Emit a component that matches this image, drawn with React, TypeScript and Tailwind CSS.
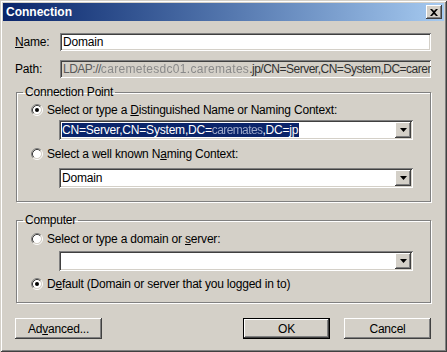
import type { ReactNode } from 'react';

const raised =
    'shadow-[inset_-1px_-1px_#404040,inset_1px_1px_#ffffff,inset_-2px_-2px_#808080,inset_2px_2px_#d4d0c8]';
const sunken =
    'shadow-[inset_1px_1px_#808080,inset_-1px_-1px_#ffffff,inset_2px_2px_#404040,inset_-2px_-2px_#d4d0c8]';

function Radio({ checked }: { checked?: boolean }) {
    return (
        <svg width="12" height="12" viewBox="0 0 12 12" className="shrink-0">
            <circle cx="6" cy="6" r="4.2" fill="#ffffff" />
            <path d="M2.11 9.89 A5.5 5.5 0 0 1 9.89 2.11" stroke="#808080" fill="none" />
            <path d="M9.89 2.11 A5.5 5.5 0 0 1 2.11 9.89" stroke="#ffffff" fill="none" />
            <path d="M2.82 9.18 A4.5 4.5 0 0 1 9.18 2.82" stroke="#404040" fill="none" />
            <path d="M9.18 2.82 A4.5 4.5 0 0 1 2.82 9.18" stroke="#d4d0c8" fill="none" />
            {checked && <circle cx="6" cy="6" r="2" fill="#000000" />}
        </svg>
    );
}

function RadioRow({ checked, children, className = '' }: { checked?: boolean; children: ReactNode; className?: string }) {
    return (
        <div className={`flex h-[14px] items-center gap-[4px] pl-[14px] ${className}`}>
            <Radio checked={checked} />
            <span className="leading-[14px]">{children}</span>
        </div>
    );
}

function Combo({ children, className = '' }: { children?: ReactNode; className?: string }) {
    return (
        <div className={`ml-[42px] mr-[17px] flex h-[20px] bg-white p-[2px] ${sunken} ${className}`}>
            <div className="flex flex-1 items-center overflow-hidden whitespace-nowrap pl-[1px] leading-[14px]">
                {children}
            </div>
            <div className={`flex h-full w-[16px] items-center justify-center bg-[#d4d0c8] ${raised}`}>
                <svg width="7" height="4" viewBox="0 0 7 4">
                    <polygon points="0,0 7,0 3.5,4" fill="#000000" />
                </svg>
            </div>
        </div>
    );
}

function Button({ children, isDefault }: { children: ReactNode; isDefault?: boolean }) {
    return (
        <div className={`h-[21px] w-[87px] ${isDefault ? 'border border-black' : ''}`}>
            <div className={`flex h-full w-full items-center justify-center bg-[#d4d0c8] ${raised}`}>
                {children}
            </div>
        </div>
    );
}

export default function App() {
    return (
        <div
            className="flex h-[352px] w-[447px] flex-col bg-[#d4d0c8] p-[3px] text-[12px] tracking-[-0.2px] text-black shadow-[inset_1px_1px_#d4d0c8,inset_-1px_-1px_#404040,inset_2px_2px_#ffffff,inset_-2px_-2px_#808080]"
            style={{ fontFamily: '"Liberation Sans", Arial, sans-serif' }}
        >
            {/* title bar */}
            <div className="flex h-[18px] items-center justify-between bg-gradient-to-r from-[#0a246a] to-[#a6caf0] pl-[3px] pr-[2px]">
                <span className="text-[12px] font-bold tracking-normal text-white">Connection</span>
                <div className={`flex h-[14px] w-[16px] items-center justify-center bg-[#d4d0c8] ${raised}`}>
                    <svg width="8" height="7" viewBox="0 0 8 7">
                        <path d="M0 0 L2 0 L4 2 L6 0 L8 0 L5 3.5 L8 7 L6 7 L4 5 L2 7 L0 7 L3 3.5 Z" fill="#000000" />
                    </svg>
                </div>
            </div>

            <div className="flex flex-1 flex-col pl-[12px] pr-[13px]">
                <div className="mt-[12px] flex h-[18px] items-center">
                    <span className="w-[45px]">
                        <u>N</u>ame:
                    </span>
                    <div className={`flex h-full flex-1 items-center bg-white pl-[3px] ${sunken}`}>Domain</div>
                </div>

                <div className="mt-[9px] flex h-[18px] items-center">
                    <span className="w-[45px]">Path:</span>
                    <div
                        className={`flex h-full flex-1 items-center overflow-hidden whitespace-nowrap bg-[#d4d0c8] pl-[3px] tracking-[-0.5px] text-[#303030] ${sunken}`}
                    >
                        <span className="text-[#5a5a5a]">LDAP://</span>
                        <span className="tracking-[0.3px] text-[#8a8a8a] blur-[0.7px]">caremetesdc01.caremates</span>
                        <span>.jp/CN=Server,CN=System,DC=carema</span>
                    </div>
                </div>

                <fieldset className="ml-[1px] mt-[7px] border border-[#808080] pb-[13px] shadow-[inset_1px_1px_#ffffff,1px_1px_#ffffff]">
                    <legend className="ml-[6px] px-[2px] leading-[14px]">Connection Point</legend>
                    <RadioRow checked className="mt-[4px]">
                        Select or type a <u>D</u>istinguished Name or Naming Context:
                    </RadioRow>
                    <Combo className="mt-[3px]">
                        <span className="bg-[#0a246a] pr-[1px] text-white">
                            CN=Server,CN=System,DC=
                            <span className="tracking-[-0.6px] text-[#9aa6c8] blur-[0.7px]">caremates</span>
                            ,DC=jp
                        </span>
                    </Combo>
                    <RadioRow className="mt-[7px]">
                        Select a well known N<u>a</u>ming Context:
                    </RadioRow>
                    <Combo className="mt-[7px]">Domain</Combo>
                </fieldset>

                <fieldset className="ml-[1px] mt-[11px] border border-[#808080] pb-[11px] shadow-[inset_1px_1px_#ffffff,1px_1px_#ffffff]">
                    <legend className="ml-[6px] px-[2px] leading-[14px]">Computer</legend>
                    <RadioRow className="mt-[5px]">
                        Select or type a domain or <u>s</u>erver:
                    </RadioRow>
                    <Combo className="mt-[5px]" />
                    <RadioRow checked className="mt-[6px]">
                        D<u>e</u>fault (Domain or server that you logged in to)
                    </RadioRow>
                </fieldset>

                <div className="mt-[15px] flex items-center">
                    <Button>
                        Ad<u>v</u>anced...
                    </Button>
                    <div className="flex-1" />
                    <Button isDefault>OK</Button>
                    <div className="w-[14px]" />
                    <Button>Cancel</Button>
                </div>
            </div>
        </div>
    );
}
